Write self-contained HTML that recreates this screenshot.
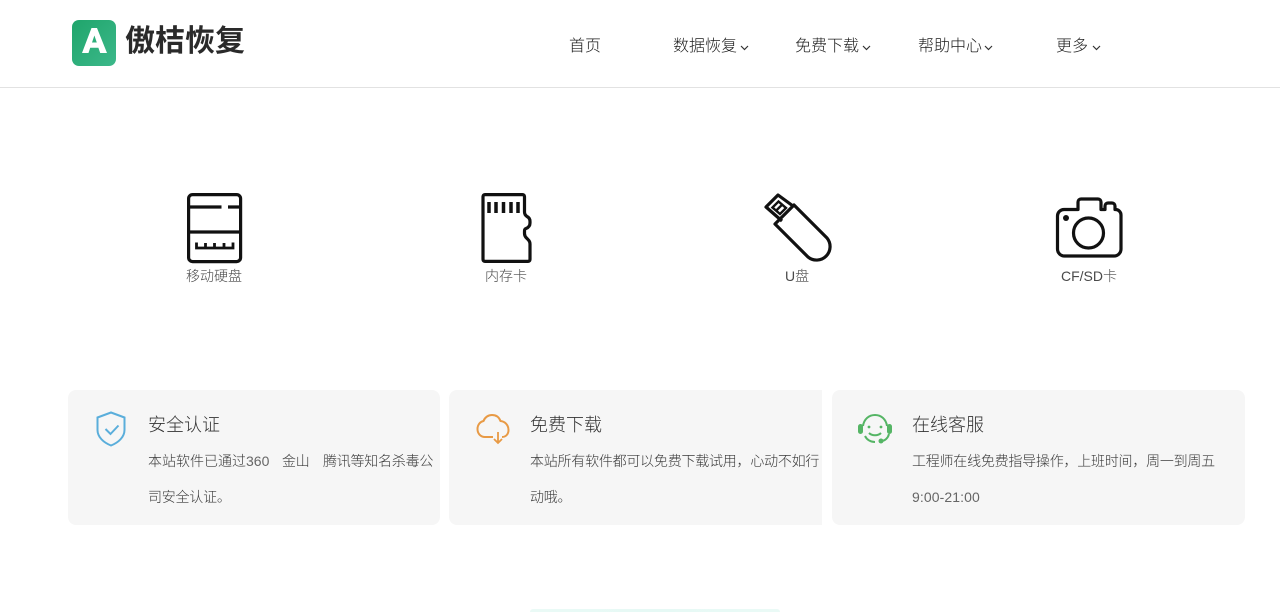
<!DOCTYPE html>
<html lang="zh-CN">
<head>
<meta charset="utf-8">
<title>傲桔恢复</title>
<style>
*{margin:0;padding:0;box-sizing:border-box}
html,body{width:1280px;height:612px;overflow:hidden;background:#fff}
body{position:relative;font-family:"Liberation Sans","Noto Sans CJK SC",sans-serif;color:#333}
.a{position:absolute;white-space:nowrap}
.nav{top:36px;font-size:16px;line-height:22px;color:#1c1c1c;font-weight:300}
.lab{top:266px;font-size:14px;line-height:20px;color:#4a4a4a;text-align:center;font-weight:300}
.card{position:absolute;top:390px;height:135px;background:#f6f6f6;border-radius:8px}
.t{top:413px;font-size:18px;line-height:24px;color:#333;font-weight:300}
.d{font-size:14px;line-height:20px;color:#3a3a3a;letter-spacing:-.23px;font-weight:300}
.l{color:#666}
svg{position:absolute;display:block;overflow:visible}
</style>
</head>
<body>
<div class="a" style="left:0;top:87px;width:1280px;height:1px;background:#e2e2e2"></div>

<svg style="left:72px;top:20px" width="44" height="46" viewBox="0 0 44 46">
<defs><linearGradient id="g" x1="0" y1="0" x2="1" y2="1"><stop offset="0" stop-color="#1fa56b"/><stop offset="1" stop-color="#3cb88a"/></linearGradient></defs>
<rect width="44" height="46" rx="7" fill="url(#g)"/>
<path d="M10 33 19.500 8h5.500L35 33h-6.800l-1.800-5.200h-8.200L16.500 33zM20 22.500h4.800L22.400 15.500z" fill="#fff" fill-rule="evenodd"/>
</svg>
<div class="a" style="left:125px;top:21px;font-size:30px;line-height:42px;font-weight:700;color:#2a2a2a">傲桔恢复</div>

<div class="a nav" style="left:569px">首页</div>
<div class="a nav" style="left:673px">数据恢复</div>
<div class="a nav" style="left:795px">免费下载</div>
<div class="a nav" style="left:918px">帮助中心</div>
<div class="a nav" style="left:1056px">更多</div>
<svg style="left:740px;top:45px" width="9" height="6" viewBox="0 0 9 6"><path d="M1 1l3.500 3.500L8 1" fill="none" stroke="#333" stroke-width="1.200"/></svg>
<svg style="left:862px;top:45px" width="9" height="6" viewBox="0 0 9 6"><path d="M1 1l3.500 3.500L8 1" fill="none" stroke="#333" stroke-width="1.200"/></svg>
<svg style="left:984px;top:45px" width="9" height="6" viewBox="0 0 9 6"><path d="M1 1l3.500 3.500L8 1" fill="none" stroke="#333" stroke-width="1.200"/></svg>
<svg style="left:1092px;top:45px" width="9" height="6" viewBox="0 0 9 6"><path d="M1 1l3.500 3.500L8 1" fill="none" stroke="#333" stroke-width="1.200"/></svg>

<!-- hard disk -->
<svg style="left:187px;top:193px" width="55" height="70" viewBox="0 0 55 70" fill="none" stroke="#111" stroke-width="3.200">
<rect x="1.600" y="1.600" width="52" height="67" rx="4"/>
<path d="M2 14H34.500M41 14H53M2 39H53"/>
<path d="M9.500 49.500v5.500H46V49.500M18.500 50v4M27.500 50v4M37 50v4" stroke-width="2.800"/>
</svg>
<div class="a lab" style="left:186px">移动硬盘</div>

<!-- memory card -->
<svg style="left:481px;top:193px" width="52" height="70" viewBox="0 0 52 70" fill="none" stroke="#111" stroke-width="3.200">
<path d="M4 1.600H41.500a2 2 0 0 1 2 2V19c0 2.500 1 3.500 2.500 4.500 2.500 1.200 3 3 3 5v1.500c0 3-1.500 4.500-4 5.500-1.500.5-1.500 1.500-1.500 3v2c0 2 .5 3 2 4.500 2.500 2.500 3.500 3.500 3.500 6v15.400a2 2 0 0 1-2 2H4a2 2 0 0 1-2-2V3.600a2 2 0 0 1 2-2z"/>
<path d="M8 9v11M15 9v11M22.500 9v11M30 9v11M37 9v11" stroke-width="3.500"/>
</svg>
<div class="a lab" style="left:485px">内存卡</div>

<!-- usb -->
<svg style="left:764px;top:193px" width="68" height="71" viewBox="0 0 68 71" fill="none" stroke="#111" stroke-width="3.200">
<path d="M11 31 30 12 63 45A13.500 13.500 0 0 1 44 64Z" stroke-linejoin="round"/>
<path d="M18 28 2 14 14 2 29 13" stroke-linejoin="round"/>
<path d="M8.500 14.500 14.500 8.500 22 15 16 21ZM11.800 18 18 11.800" stroke-width="2.400"/>
</svg>
<div class="a lab" style="left:785px">U盘</div>

<!-- camera -->
<svg style="left:1056px;top:197px" width="66" height="62" viewBox="0 0 66 62" fill="none" stroke="#111" stroke-width="3.200" stroke-linejoin="round">
<path d="M8 12.500H22V5a3 3 0 0 1 3-3h17a3 3 0 0 1 3 3v7.500h4V9a3 3 0 0 1 3-3h4a3 3 0 0 1 3 3v3.500h.5a5.500 5.500 0 0 1 5.500 5.500v34a7 7 0 0 1-7 7H8.500a7 7 0 0 1-7-7V19a6.500 6.500 0 0 1 6.500-6.500z"/>
<circle cx="32.500" cy="36" r="15"/>
<circle cx="10" cy="21" r="3" fill="#111" stroke="none"/>
</svg>
<div class="a lab" style="left:1061px">CF/SD卡</div>

<div class="card" style="left:68px;width:372px"></div>
<div class="card" style="left:449px;width:373px;border-radius:8px 0 0 8px"></div>
<div class="card" style="left:832px;width:413px"></div>

<svg style="left:96px;top:411px" width="30" height="36" viewBox="0 0 30 36" fill="none" stroke="#5aaedb" stroke-width="2">
<path d="M15 1.500 28.500 6.500V19c0 7-6 12.500-13.500 15.500C7.500 31.500 1.500 26 1.500 19V6.500z"/>
<path d="M9.500 18l5 5 8-8.500"/>
</svg>
<div class="a t" style="left:148px">安全认证</div>
<div class="a d" style="left:148px;top:451px;letter-spacing:0">本站软件已通过<span class="l">360</span></div>
<div class="a d" style="left:282px;top:451px">金山</div>
<div class="a d" style="left:323px;top:451px">腾讯等知名杀毒公</div>
<div class="a d" style="left:148px;top:487px">司安全认证。</div>

<svg style="left:476px;top:413px" width="34" height="32" viewBox="0 0 34 32" fill="none" stroke="#e89a45" stroke-width="2">
<path d="M17 24H9C4.500 24 1.500 20.500 1.500 16C1.500 11.500 4.500 8.500 7.500 8C9 4 12.500 2 16 2C20 2 23 4 24.500 8C29 8.500 32.500 12 32.500 17C32.500 21 30 24 26 24"/>
<path d="M22 19v11M18 26l4 4 4-4" stroke-width="1.800"/>
</svg>
<div class="a t" style="left:530px">免费下载</div>
<div class="a d" style="left:530px;top:451px">本站所有软件都可以免费下载试用，心动不如行</div>
<div class="a d" style="left:530px;top:487px">动哦。</div>

<svg style="left:858px;top:413px" width="35" height="32" viewBox="0 0 35 32" fill="none" stroke="#55b565" stroke-width="2">
<path d="M5 13C6 6 11 2 17 2s11 4 12 11"/>
<path d="M7 23C9 27 13 29 17 29"/>
<rect x="0" y="11" width="5" height="10" rx="2.500" fill="#55b565" stroke="none"/>
<rect x="29" y="11" width="5" height="10" rx="2.500" fill="#55b565" stroke="none"/>
<circle cx="11" cy="14" r="1.400" fill="#55b565" stroke="none"/>
<circle cx="23" cy="14" r="1.400" fill="#55b565" stroke="none"/>
<path d="M11 20c3 3 9 3 12 0"/>
<circle cx="23" cy="28" r="2.500" fill="#55b565" stroke="none"/>
<path d="M31 21C30 25 27 28 23 28"/>
</svg>
<div class="a t" style="left:912px">在线客服</div>
<div class="a d l" style="left:912px;top:487px;letter-spacing:.1px">9:00-21:00</div>
<div class="a d" style="left:912px;top:451px">工程师在线免费指导操作，上班时间，周一到周五</div>

<div class="a" style="left:530px;top:609px;width:250px;height:3px;background:linear-gradient(90deg,#eafaf6,#e6f9f5 50%,#eafaf6);border-radius:3px 3px 0 0"></div>
</body>
</html>
